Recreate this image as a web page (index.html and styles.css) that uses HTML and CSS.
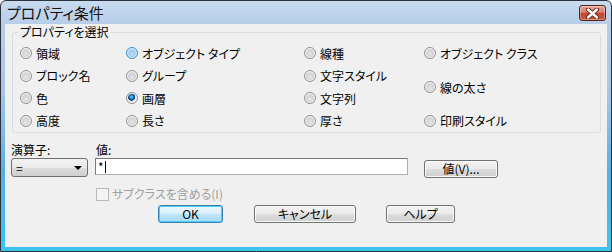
FILE: index.html
```html
<!DOCTYPE html>
<html>
<head>
  <meta charset="utf-8">
  <title>プロパティ条件</title>
  <link rel="stylesheet" href="styles.css">
</head>
<body>
  <div class="window">
    <div class="titlebar">
      <span class="title">プロパティ条件</span>
      <button class="close-button">
        <svg width="17" height="11" viewBox="0 0 17 11">
          <path d="M4 1.5 L13 9.5 M13 1.5 L4 9.5" stroke="#5a1c12" stroke-width="4.2" stroke-linecap="round"/>
          <path d="M4 1.5 L13 9.5 M13 1.5 L4 9.5" stroke="#fff" stroke-width="2.4" stroke-linecap="round"/>
        </svg>
      </button>
    </div>

    <div class="client">
      <fieldset class="group-box">
        <legend>プロパティを選択</legend>
        <div class="radio-grid">
          <label class="radio-item"><span class="radio"></span>領域</label>
          <label class="radio-item"><span class="radio hot"></span>オブジェクト タイプ</label>
          <label class="radio-item"><span class="radio"></span>線種</label>
          <label class="radio-item"><span class="radio"></span>オブジェクト クラス</label>

          <label class="radio-item"><span class="radio"></span>ブロック名</label>
          <label class="radio-item"><span class="radio"></span>グループ</label>
          <label class="radio-item"><span class="radio"></span>文字スタイル</label>
          <label class="radio-item tall"><span class="radio"></span>線の太さ</label>

          <label class="radio-item"><span class="radio"></span>色</label>
          <label class="radio-item"><span class="radio checked"></span>画層</label>
          <label class="radio-item"><span class="radio"></span>文字列</label>

          <label class="radio-item"><span class="radio"></span>高度</label>
          <label class="radio-item"><span class="radio"></span>長さ</label>
          <label class="radio-item"><span class="radio"></span>厚さ</label>
          <label class="radio-item"><span class="radio"></span>印刷スタイル</label>
        </div>
      </fieldset>

      <div class="value-grid">
        <span class="field-label">演算子:</span>
        <span class="field-label">値:</span>
        <span></span>

        <div class="combo"><span>=</span><span class="combo-arrow"></span></div>
        <div class="text-field">*<span class="caret"></span></div>
        <button class="push-button value-button">値(V)...</button>

        <span></span>
        <label class="check-item"><span class="checkbox"></span>サブクラスを含める(I)</label>
        <span></span>
      </div>

      <div class="button-row">
        <button class="push-button default ok-button">OK</button>
        <button class="push-button cancel-button">キャンセル</button>
        <button class="push-button help-button">ヘルプ</button>
      </div>
    </div>
  </div>
</body>
</html>
```

FILE: styles.css
```css
body {
  margin: 0;
  width: 612px;
  height: 252px;
  background-color: #fff;
  font-family: "Noto Sans CJK JP", "DejaVu Sans", sans-serif;
  font-size: 12px;
  font-feature-settings: "palt";
  color: #000;
  overflow: hidden;
}

.window {
  box-sizing: border-box;
  width: 612px;
  height: 252px;
  border: 1px solid #29323d;
  border-radius: 6px 6px 0 0;
  padding: 0 4px 4px;
  display: flex;
  flex-direction: column;
  background: linear-gradient(#c9dcf0 0px, #b6cde7 24px, #a8c6e8 90px, #5aaee2 170px, #3cc3ef 100%);
}

.titlebar {
  height: 23px;
  display: flex;
  align-items: flex-start;
  justify-content: space-between;
  flex-shrink: 0;
}

.title {
  font-size: 15px;
  line-height: 20px;
  margin: 2px 0 0 2px;
  color: #111;
}

.close-button {
  width: 27px;
  height: 16px;
  margin: 4px 1px 0 0;
  padding: 0;
  border: 1px solid #5a1f1a;
  border-radius: 3px;
  background: linear-gradient(#e7a799 0%, #d8806d 45%, #c0462f 50%, #c8593f 100%);
  box-shadow: inset 0 0 0 1px rgba(255, 255, 255, 0.35);
  display: flex;
  align-items: center;
  justify-content: center;
}

.client {
  flex: 1;
  background-color: #f0f0f0;
  display: flex;
  flex-direction: column;
}

/* group box */
.group-box {
  margin: 1px 6px 0 7px;
  padding: 3px 0 0 7px;
  border: 1px solid #d5dfe5;
  border-radius: 3px;
  height: 108px;
  box-sizing: border-box;
}

.group-box legend {
  padding: 0 2px;
  margin-left: -2px;
  line-height: 14px;
}

.radio-grid {
  display: grid;
  grid-template-columns: 106px 178px 120px 1fr;
  grid-auto-rows: 22.5px;
}

.radio-item {
  display: flex;
  align-items: center;
  gap: 4px;
  white-space: nowrap;
}

.radio-item.tall {
  grid-row: span 2;
}

.radio {
  box-sizing: border-box;
  width: 12px;
  height: 12px;
  border-radius: 50%;
  border: 1px solid #939393;
  background: radial-gradient(circle at 50% 60%, #e6e6e6 0%, #d2d2d2 45%, #f7f7f7 100%);
  box-shadow: inset 0 0 0 1px #f4f4f4;
}

.radio.hot {
  border-color: #3d8ec7;
  background: radial-gradient(circle at 50% 60%, #b5ddf6 0%, #9ccfee 45%, #e3f3fd 100%);
  box-shadow: inset 0 0 0 1px #dff1fc;
}

.radio.checked {
  background: radial-gradient(circle at 45% 40%, #8fd3fb 0px, #1a79c1 2px, #093d73 3.5px, #e8e8e8 4px, #f8f8f8 100%);
}

/* operator / value row */
.value-grid {
  display: grid;
  grid-template-columns: 77px 313px 74px;
  column-gap: 7px;
  margin: 9px 0 0 6px;
}

.value-grid .combo + .text-field + .value-button {
  margin-left: 9px;
}

.field-label {
  line-height: 15px;
  margin-bottom: 1px;
}

.value-grid > .field-label:nth-child(2) {
  margin-left: 1px;
}

.combo {
  box-sizing: border-box;
  height: 19px;
  border: 1px solid #707070;
  border-radius: 3px;
  background: linear-gradient(#f2f2f2 0%, #ebebeb 50%, #dddddd 51%, #cfcfcf 100%);
  display: flex;
  align-items: center;
  justify-content: space-between;
  padding: 0 3px 0 4px;
  line-height: 14px;
}

.combo-arrow {
  width: 0;
  height: 0;
  border-left: 4px solid transparent;
  border-right: 4px solid transparent;
  border-top: 4px solid #000;
  margin-right: 2px;
}

.text-field {
  box-sizing: border-box;
  height: 17px;
  border: 1px solid #7a7a7a;
  border-right-color: #adadad;
  border-bottom-color: #adadad;
  background-color: #fff;
  padding: 0 2px;
  line-height: 15px;
  display: flex;
  align-items: center;
}

.caret {
  display: inline-block;
  width: 1px;
  height: 12px;
  background-color: #000;
  margin-left: 1px;
}

.push-button {
  box-sizing: border-box;
  height: 18px;
  padding: 0;
  border: 1px solid #707070;
  border-radius: 3px;
  background: linear-gradient(#f2f2f2 0%, #ebebeb 50%, #dddddd 51%, #cfcfcf 100%);
  box-shadow: inset 0 0 0 1px #fbfbfb;
  font-family: inherit;
  font-size: 12px;
  font-feature-settings: "palt";
  line-height: 14px;
  color: #000;
}

.value-button {
  margin-top: 2px;
  width: 74px;
}

.check-item {
  display: flex;
  align-items: center;
  gap: 3px;
  margin: 9px 0 0 1px;
  color: #a0a0a0;
  line-height: 14px;
}

.checkbox {
  box-sizing: border-box;
  width: 13px;
  height: 13px;
  border: 1px solid #b8b8b8;
  background-color: #f4f4f4;
}

.button-row {
  display: flex;
  gap: 31px;
  margin: 4px 0 0 153px;
}

.ok-button {
  width: 65px;
}

.cancel-button {
  width: 102px;
}

.help-button {
  width: 69px;
  margin-left: -1px;
}

.push-button.default {
  border-color: #3c7fb1;
  background: linear-gradient(#eaf6fd 0%, #d9f0fc 50%, #bee6fd 51%, #a7d9f5 100%);
  box-shadow: inset 0 0 0 1px #48d2f8;
}
```
